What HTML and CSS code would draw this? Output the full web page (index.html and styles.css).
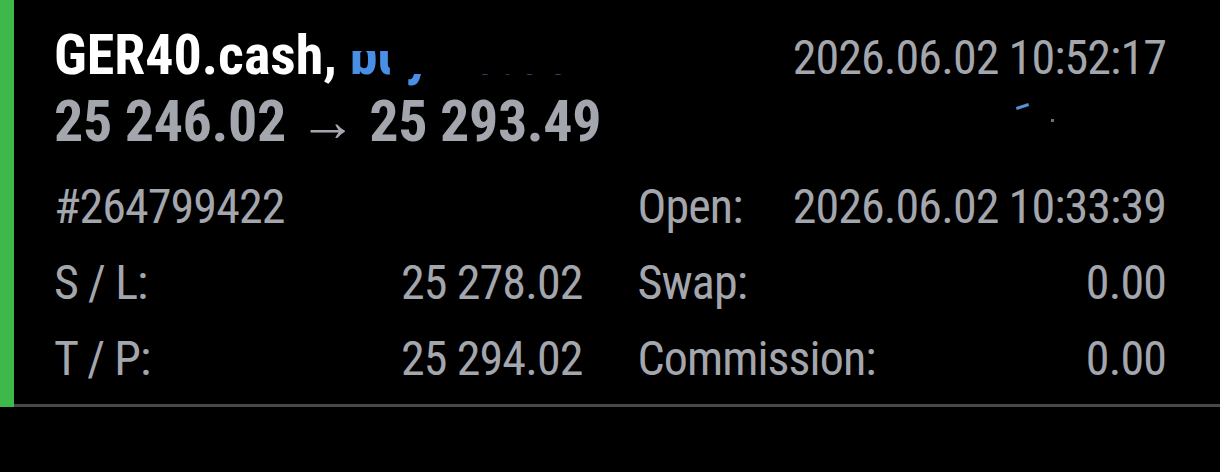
FILE: index.html
```html
<!DOCTYPE html>
<html>
<head>
<meta charset="utf-8">
<link rel="stylesheet" href="styles.css">
</head>
<body>
<div class="card">
  <div class="bar"></div>
  <div class="body">
    <div class="head">
      <div class="title">GER40.cash, <span class="side">buy 20.00</span></div>
      <div class="time">2026.06.02 10:52:17</div>
    </div>
    <div class="price">
      <span>25 246.02 → 25 293.49</span>
      <span class="remnant"><i class="dash"></i><i class="dot"></i></span>
    </div>
    <div class="grid">
      <div class="cell"><span>#264799422</span><span></span></div>
      <div class="cell"><span>Open:</span><span>2026.06.02 10:33:39</span></div>
      <div class="cell"><span>S / L:</span><span>25 278.02</span></div>
      <div class="cell"><span>Swap:</span><span>0.00</span></div>
      <div class="cell"><span>T / P:</span><span>25 294.02</span></div>
      <div class="cell"><span>Commission:</span><span>0.00</span></div>
    </div>
  </div>
</div>
</body>
</html>
```
FILE: styles.css
```css
html, body {
  margin: 0;
  padding: 0;
  background: #000;
}
body {
  width: 1220px;
  height: 472px;
  overflow: hidden;
  font-family: Roboto, "Liberation Sans", sans-serif;
  font-stretch: 80%;
  color: #a3a6ad;
}
.card {
  display: flex;
}
.bar {
  width: 14px;
  background: #3db84b;
  flex: none;
}
.body {
  flex: 1;
  padding: 24px 54px 7px 40px;
  border-bottom: 3px solid #47474c;
}
.head {
  display: flex;
  justify-content: space-between;
  align-items: baseline;
  line-height: 63px;
}
.title {
  font-size: 56px;
  font-weight: 700;
  font-stretch: 85%;
  color: #ffffff;
}
.side {
  display: inline-block;
  color: #4a8fe6;
  clip-path: polygon(0 27px, 40px 27px, 40px 50px, 100% 50px, 100% 100%, 0 100%);
}
.time {
  font-size: 48px;
  letter-spacing: -0.9px;
}
.price {
  display: flex;
  justify-content: space-between;
  font-size: 58px;
  font-weight: 700;
  font-stretch: 83%;
  letter-spacing: -0.4px;
  line-height: 64px;
}
.remnant {
  display: flex;
  align-items: flex-start;
  margin-right: 112px;
  padding-top: 16px;
  gap: 22px;
}
.dash {
  display: block;
  width: 13px;
  height: 3px;
  background: #5a8fd8;
  transform: rotate(-18deg);
}
.dot {
  display: block;
  width: 3px;
  height: 3px;
  margin-top: 14px;
  background: #6b6f78;
}
.grid {
  margin-top: 16px;
  display: grid;
  grid-template-columns: 1fr 1fr;
  column-gap: 55px;
  font-size: 48px;
  letter-spacing: -0.9px;
  line-height: 76px;
}
.cell {
  display: flex;
  justify-content: space-between;
  white-space: nowrap;
}
```
